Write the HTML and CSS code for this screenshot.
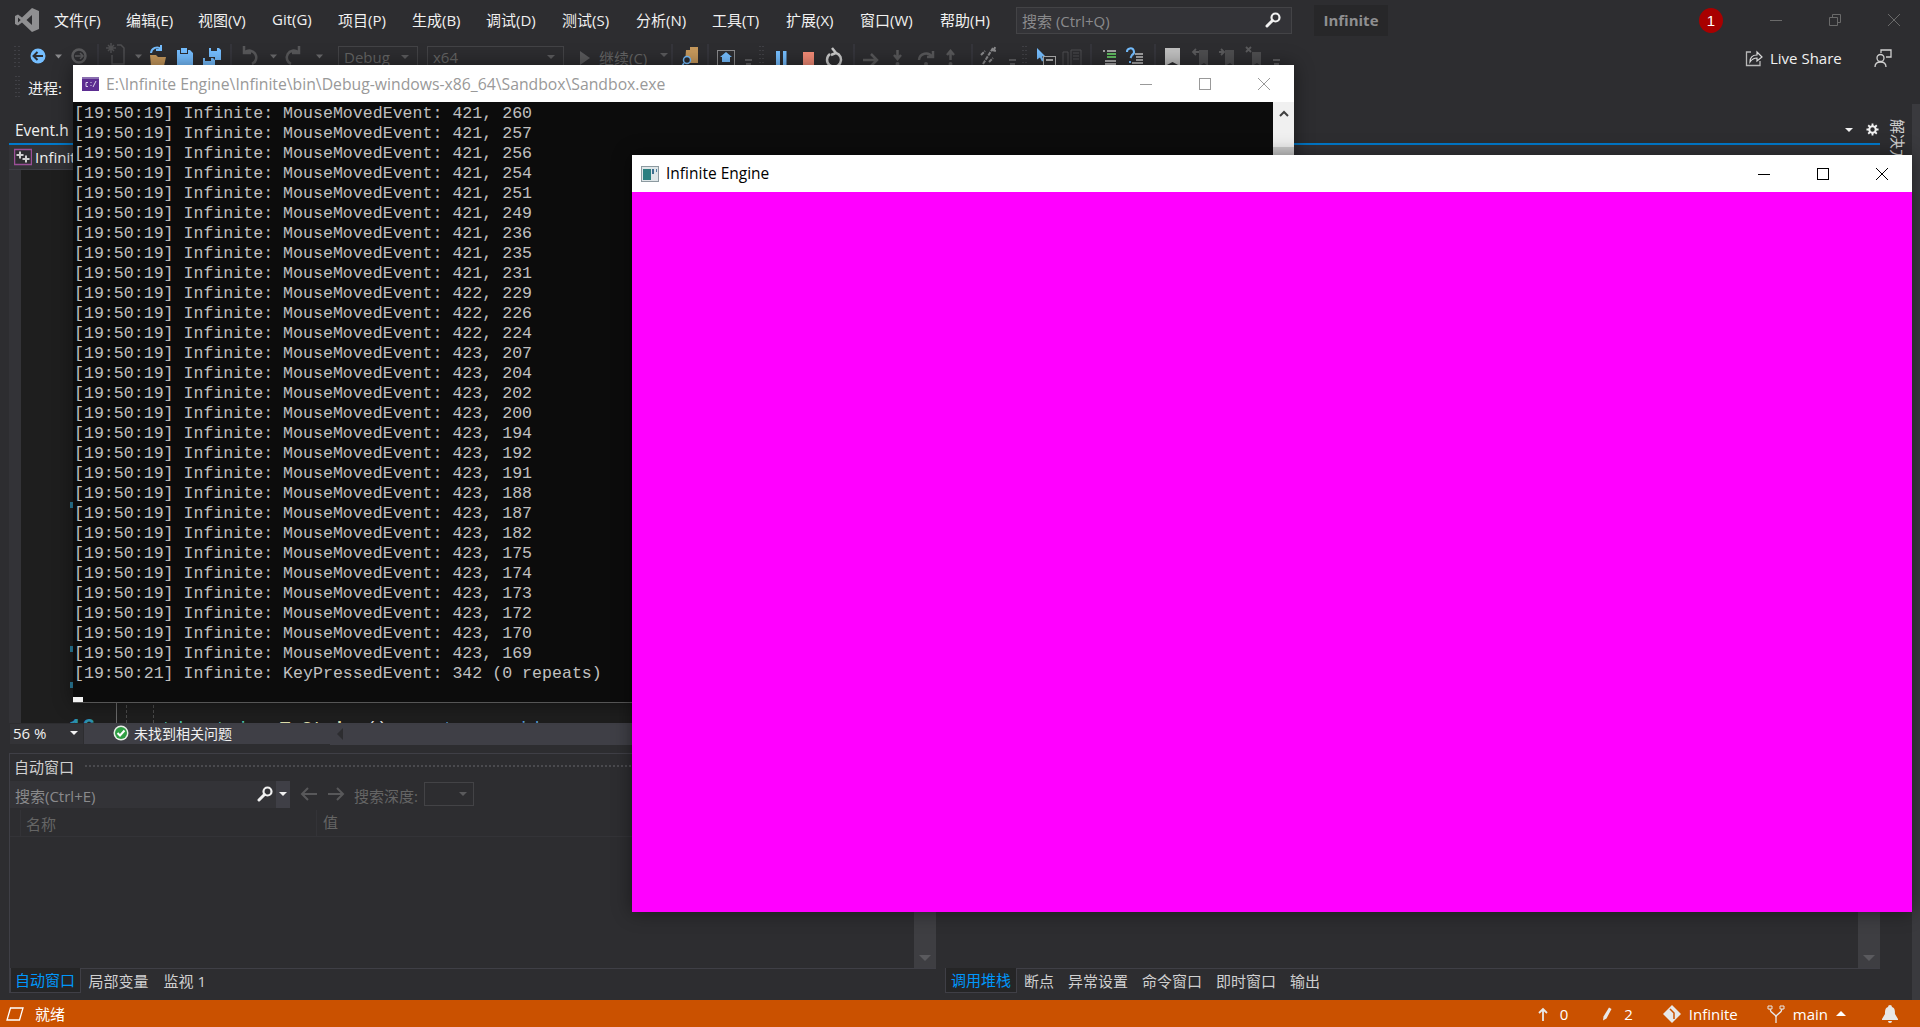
FILE: index.html
```html
<!DOCTYPE html>
<html lang="zh-CN">
<head>
  <meta charset="UTF-8">
  <title>Infinite - Microsoft Visual Studio</title>
  <link rel="stylesheet" href="styles.css">
</head>
<body>
  <!-- menu bar -->
  <header class="menubar">
    <svg class="vs-logo" viewBox="0 0 24 24" width="24" height="24"><path fill-rule="evenodd" fill="#8f8f91" d="M17 0L24 3V21L17 24L7 14.5L3 17.5L0 16V8L3 6.5L7 9.5ZM17 7L11.5 12L17 17ZM3 9.5V14.5L5.7 12Z"/></svg>
    <nav class="menu">
      <span class="w48">文件(F)</span>
      <span class="w48">编辑(E)</span>
      <span class="w50">视图(V)</span>
      <span class="w42">Git(G)</span>
      <span class="w50">项目(P)</span>
      <span class="w50">生成(B)</span>
      <span class="w52">调试(D)</span>
      <span class="w50">测试(S)</span>
      <span class="w52">分析(N)</span>
      <span class="w50">工具(T)</span>
      <span class="w50">扩展(X)</span>
      <span class="w56">窗口(W)</span>
      <span class="w52">帮助(H)</span>
    </nav>
    <div class="quick-search">
      <span>搜索 (Ctrl+Q)</span>
      <svg viewBox="0 0 16 16" width="16" height="16"><circle cx="10.5" cy="5.5" r="4" fill="none" stroke="#f1f1f1" stroke-width="2.2"/><path d="M7.5 8.5L2 14" stroke="#f1f1f1" stroke-width="3" stroke-linecap="round"/></svg>
    </div>
    <div class="sol-name">Infinite</div>
    <div class="badge">1</div>
    <div class="caption">
      <svg viewBox="0 0 14 14" width="14" height="14"><path d="M1 7.500H13" stroke="#6a6a6a"/></svg>
      <svg viewBox="0 0 14 14" width="14" height="14"><path d="M1.500 4.500H9.500V12.500H1.500ZM4.500 4.500V1.500H12.500V9.500H9.500" fill="none" stroke="#6a6a6a"/></svg>
      <svg viewBox="0 0 14 14" width="14" height="14"><path d="M1 1L13 13M13 1L1 13" stroke="#6a6a6a"/></svg>
    </div>
  </header>

  <!-- toolbar -->
  <div class="toolbar">
    <svg class="tools-left" viewBox="10 40 322 30" width="322" height="30">
      <path d="M15 46v22M19 46v22" stroke="#55555a" stroke-dasharray="1 3"/>
      <circle cx="38" cy="56" r="7.500" fill="#75beff"/>
      <path d="M43 56H34M37.500 52L33.500 56L37.500 60" fill="none" stroke="#2d2d30" stroke-width="2"/>
      <path d="M55 54.500h7l-3.500 4z" fill="#8a8a8c"/>
      <circle cx="79" cy="56" r="6.500" fill="none" stroke="#5a5a5c" stroke-width="2.500"/>
      <path d="M75 56H83M80 53L83 56L80 59" fill="none" stroke="#5a5a5c" stroke-width="1.500"/>
      <path d="M98 44V66" stroke="#3f3f46"/>
      <path d="M108 45l6 6M114 45l-6 6M111 43v10M106 48h10" stroke="#4e4e50" stroke-width="1.500"/>
      <path d="M117 45h4l3 3v16h-12V55" fill="none" stroke="#4e4e50" stroke-width="1.500"/>
      <path d="M135 54.500h7l-3.500 4z" fill="#6a6a6c"/>
      <path d="M150 55h6l2 2h8l-2 9h-13z" fill="#c7995c"/>
      <path d="M151 53a6 6 0 0 1 10-4M161 45v5h-5" fill="none" stroke="#75beff" stroke-width="2"/>
      <path d="M177 50h3v4h8v-4h2l3 3v13h-16z" fill="#75beff"/>
      <path d="M181 48h6v5h-6z" fill="#75beff"/>
      <path d="M203 58h2v3h6v-3h2l2 2v6h-12z" fill="#75beff"/>
      <path d="M209 48h2v3h6v-3h2l2 2v10h-6v-3h-6z" fill="#75beff"/>
      <path d="M231 44V66" stroke="#3f3f46"/>
      <path d="M244 46v7h7M245 52a7 7 0 1 1 7 12" fill="none" stroke="#58585a" stroke-width="2.500"/>
      <path d="M270 54.500h7l-3.500 4z" fill="#6a6a6c"/>
      <path d="M299 46v7h-7M298 52a7 7 0 1 0-7 12" fill="none" stroke="#58585a" stroke-width="2.500"/>
      <path d="M316 54.500h7l-3.500 4z" fill="#6a6a6c"/>
    </svg>
    <div class="combo combo-debug"><span>Debug</span><i class="caret dim"></i></div>
    <div class="combo combo-arch"><span>x64</span><i class="caret dim"></i></div>
    <svg class="play" viewBox="0 0 12 16" width="12" height="16"><path d="M1 1L11 8L1 15Z" fill="#5a5a5c"/></svg>
    <span class="continue">继续(C)</span>
    <i class="caret dim"></i>
    <svg class="tools-right" viewBox="670 40 624 30" width="624" height="30">
      <path d="M672 44V66" stroke="#3f3f46"/>
      <path d="M686 50h4v-3h8v16h-13z" fill="#c7995c"/>
      <circle cx="687" cy="60" r="3.500" fill="#2d2d30" stroke="#75beff" stroke-width="1.500"/>
      <path d="M684 63l-2 3" stroke="#75beff" stroke-width="1.500"/>
      <path d="M708 44V66" stroke="#3f3f46"/>
      <rect x="717.500" y="50.500" width="17" height="15" fill="none" stroke="#8a8a8c"/>
      <path d="M726 52l6 5h-2v5h-8v-5h-2z" fill="#75beff"/>
      <path d="M745 60h7M746 64h5" stroke="#8a8a8c"/>
      <path d="M760 46v22M763 46v22" stroke="#55555a" stroke-dasharray="1 3"/>
      <path d="M776 51h4v16h-4zM783 51h3.500v16H783z" fill="#75beff"/>
      <rect x="803" y="52" width="11" height="13" fill="#f38b76"/>
      <path d="M830 54a7 7 0 1 0 6-1M832 48l4 5-5 2" fill="none" stroke="#c8c8c8" stroke-width="2.500"/>
      <path d="M854 44V66" stroke="#3f3f46"/>
      <path d="M863 60h14M871 54l6 6-6 6" fill="none" stroke="#58585a" stroke-width="2.500"/>
      <path d="M897.500 50v8M894 55l3.500 4 3.500-4" fill="none" stroke="#58585a" stroke-width="2.500"/>
      <circle cx="897.500" cy="64" r="2" fill="#58585a"/>
      <path d="M919 60a7 7 0 0 1 13-3M933 51v6h-6" fill="none" stroke="#58585a" stroke-width="2.500"/>
      <circle cx="926" cy="64" r="2" fill="#58585a"/>
      <path d="M950.500 60v-8M947 55l3.500-4 3.500 4" fill="none" stroke="#58585a" stroke-width="2.500"/>
      <circle cx="950.500" cy="64" r="2" fill="#58585a"/>
      <path d="M972 44V66" stroke="#3f3f46"/>
      <path d="M983 64l10-16M981 55l4-4M989 62l4-4M992 50l4 1M995 47l-1 4" fill="none" stroke="#8a8a8c" stroke-width="2" stroke-dasharray="4 1"/>
      <path d="M1009 60h7M1010 64h5" stroke="#8a8a8c"/>
      <path d="M1023 46v22M1026 46v22" stroke="#55555a" stroke-dasharray="1 3"/>
      <path d="M1037 48l8 8-3 .500 2 4-2 1-2-4-3 2z" fill="#75beff"/>
      <rect x="1043.500" y="56.500" width="12" height="9" fill="none" stroke="#b0b0b0"/>
      <path d="M1046 60h7" stroke="#b0b0b0" stroke-width="2"/>
      <path d="M1063 52h5v14h-5zM1071 50h10v16h-10zM1073 53h6M1073 56h6M1073 59h6" fill="none" stroke="#4e4e50"/>
      <path d="M1091 44V66" stroke="#3f3f46"/>
      <path d="M1103 51h2M1107 51h9" stroke="#c8c8c8" stroke-width="1.500"/>
      <path d="M1107 54h9M1107 57h9" stroke="#5fb95f" stroke-width="2"/>
      <path d="M1105 61h11M1105 64h11" stroke="#c8c8c8" stroke-width="1.500"/>
      <path d="M1127 52a3.500 3.500 0 1 1 5 3l-1.500 3M1130 61v2" fill="none" stroke="#75beff" stroke-width="2"/>
      <path d="M1135 54h8M1136 57h7M1136 60h7M1132 63h11" stroke="#c8c8c8" stroke-width="1.500"/>
      <path d="M1155 44V66" stroke="#3f3f46"/>
      <path d="M1165 48h15v18l-7.500-4-7.500 4z" fill="#c0c0c0"/>
      <path d="M1199 50h9v16l-4-3-5 3zM1225 50h9v16l-4-3-5 3zM1252 52h9v14l-4-3-5 3z" fill="#4e4e50"/>
      <path d="M1199 52h-6M1196 49l-3 3 3 3M1219 52h5M1221 49l3 3-3 3M1246 47l5 5M1251 47l-5 5" fill="none" stroke="#5a5a5c" stroke-width="1.800"/>
      <path d="M1273 60h7M1274 64h5" stroke="#8a8a8c"/>
    </svg>
    <div class="liveshare">
      <svg viewBox="0 0 18 18" width="18" height="18"><path d="M6 3H1.500V16.500H15V12" fill="none" stroke="#b8b8b8" stroke-width="1.300"/><path d="M5 13c0-5 3-7 7-7V3l5 5-5 4V9c-3 0-5 1-7 4z" fill="none" stroke="#d8d8d8" stroke-width="1.200"/></svg>
      <span>Live Share</span>
      <svg class="person" viewBox="0 0 18 18" width="18" height="18"><circle cx="6.500" cy="9" r="3.500" fill="none" stroke="#d0d0d0" stroke-width="1.300"/><path d="M1 18c0-3 2-5 5.500-5s5.500 2 5.500 5M7 4V1H17V8H12" fill="none" stroke="#d0d0d0" stroke-width="1.300"/></svg>
    </div>
  </div>

  <div class="toolbar2">
    <svg viewBox="0 0 10 24" width="10" height="24"><path d="M5 1v22M8 1v22" stroke="#55555a" stroke-dasharray="1 3"/></svg>
    <span>进程:</span>
  </div>

  <!-- main dock area -->
  <div class="workspace">
    <div class="center">
      <div class="docwell">
        <div class="doc-tabs">
          <span class="doc-tab">Event.h</span>
          <span class="spacer"></span>
          <i class="caret light"></i>
          <svg class="gear" viewBox="0 0 14 14" width="13" height="13"><circle cx="7" cy="7" r="3.500" fill="none" stroke="#f1f1f1" stroke-width="2.200"/><path d="M7 .5v3M7 10.500v3M.5 7h3M10.500 7h3M2.400 2.400l2 2M9.600 9.600l2 2M11.600 2.400l-2 2M4.400 9.600l-2 2" stroke="#f1f1f1" stroke-width="2"/></svg>
        </div>
        <div class="doc-accent"></div>
        <div class="nav-row">
          <svg viewBox="0 0 18 18" width="18" height="18"><rect x=".5" y="1.500" width="17" height="15" fill="#2d2d30" stroke="#9b4f96" stroke-width="1.500"/><path d="M6 3.500v7M2.500 7h7M12 7.500v7M8.500 11h7" stroke="#d0d0d0" stroke-width="2"/></svg>
          <span class="nav-name">Infinit</span>
        </div>
        <div class="editor">
          <div class="margin-strip"></div>
          <div class="code">
            <i class="guide solid"></i>
            <i class="guide dash1"></i>
            <i class="guide dash2"></i>
            <div class="code-line"><i class="tick"></i></div>
            <div class="code-line"></div>
            <div class="code-line"></div>
            <div class="code-line"></div>
            <div class="code-line"><i class="tick"></i></div>
            <div class="code-line"><i class="tick"></i></div>
            <div class="code-line"><span class="ln">16</span><span class="kw-type">std::string</span> <span class="fn">ToString</span><span class="plain">()</span> <span class="kw">const</span> <span class="kw">override</span></div>
          </div>
        </div>
        <div class="editor-status">
          <div class="zoom-box"><span>56 %</span><i class="caret light"></i></div>
          <div class="issues">
            <svg viewBox="0 0 16 16" width="16" height="16"><circle cx="8" cy="8" r="7.500" fill="#e8f0e8"/><circle cx="8" cy="8" r="6" fill="#2f9e44"/><path d="M4.500 8l2.500 2.500 4.500-5" fill="none" stroke="#fff" stroke-width="2"/></svg>
            <span>未找到相关问题</span>
          </div>
          <i class="tri-left"></i>
        </div>
      </div>

      <div class="panels">
        <section class="panel panel-left">
          <div class="panel-title"><span>自动窗口</span><i class="grip"></i></div>
          <div class="search-row">
            <div class="search-box">
              <span>搜索(Ctrl+E)</span>
              <svg viewBox="0 0 16 16" width="16" height="16"><circle cx="10.500" cy="5.500" r="4" fill="none" stroke="#f1f1f1" stroke-width="2.200"/><path d="M7.500 8.500L2 14" stroke="#f1f1f1" stroke-width="3" stroke-linecap="round"/></svg>
              <div class="search-drop"><i class="caret light"></i></div>
            </div>
            <svg class="nav-arrow" viewBox="0 0 18 16" width="18" height="16"><path d="M17 8H2M8 2L2 8l6 6" fill="none" stroke="#58585a" stroke-width="2"/></svg>
            <svg class="nav-arrow" viewBox="0 0 18 16" width="18" height="16"><path d="M1 8h15M10 2l6 6-6 6" fill="none" stroke="#58585a" stroke-width="2"/></svg>
            <span class="depth-label">搜索深度:</span>
            <div class="depth-combo"><i class="caret dim"></i></div>
          </div>
          <div class="panel-body">
            <div class="grid-area">
              <div class="grid-head">
                <span class="col-name">名称</span>
                <span class="col-value">值</span>
              </div>
            </div>
            <div class="vscroll"><i class="tri-down"></i></div>
          </div>
          <div class="tool-tabs">
            <span class="tool-tab active">自动窗口</span>
            <span class="tool-tab">局部变量</span>
            <span class="tool-tab">监视 1</span>
          </div>
        </section>
        <section class="panel panel-right">
          <div class="panel-body">
            <div class="grid-area"></div>
            <div class="vscroll"><i class="tri-down"></i></div>
          </div>
          <div class="tool-tabs">
            <span class="tool-tab active">调用堆栈</span>
            <span class="tool-tab">断点</span>
            <span class="tool-tab">异常设置</span>
            <span class="tool-tab">命令窗口</span>
            <span class="tool-tab">即时窗口</span>
            <span class="tool-tab">输出</span>
          </div>
        </section>
      </div>
    </div>
    <aside class="side-tabs"><span>解决方案</span></aside>
    <div class="side-stripe"></div>
  </div>

  <!-- status bar -->
  <footer class="statusbar">
    <svg viewBox="0 0 18 14" width="18" height="14"><path d="M4.500 1H17L13.500 13H1Z" fill="none" stroke="#fff" stroke-width="1.300"/></svg>
    <span class="ready">就绪</span>
    <span class="spacer"></span>
    <div class="stat count unpushed">
      <svg viewBox="0 0 10 14" width="10" height="14"><path d="M5 14V2M1 6l4-4 4 4" fill="none" stroke="#e8e8e8" stroke-width="1.800"/></svg>
      <span>0</span>
    </div>
    <div class="stat count">
      <svg viewBox="0 0 10 14" width="10" height="14"><path d="M7 .5l2.500 1.500-5 9.500L1 13.500l.5-4z" fill="#e8e8e8"/></svg>
      <span>2</span>
    </div>
    <div class="stat">
      <svg viewBox="0 0 18 18" width="18" height="18"><path d="M9 0l9 9-9 9-9-9z" fill="#e8e8e8"/><path d="M7 4l4 4v6" fill="none" stroke="#ca5100" stroke-width="1.500"/></svg>
      <span>Infinite</span>
    </div>
    <div class="stat branch">
      <svg viewBox="0 0 18 18" width="18" height="18"><path d="M3 4c0 4 6 5 6 8v6M15 4c0 4-6 5-6 8" fill="none" stroke="#e8e8e8" stroke-width="1.300"/><path d="M1 1h4v3H1zM13 1h4v3h-4z" fill="none" stroke="#e8e8e8"/></svg>
      <span>main</span>
      <i class="tri-up"></i>
    </div>
    <svg class="bell" viewBox="0 0 20 20" width="20" height="20"><path d="M10 1a2 2 0 0 1 2 2c3 1 3 4 3 7l3 5v1H2v-1l3-5c0-3 0-6 3-7a2 2 0 0 1 2-2zM8 17h4a2 2 0 0 1-4 0z" fill="#e8e8e8"/></svg>
  </footer>

  <!-- console window -->
  <div class="win console-win">
    <div class="win-title">
      <svg viewBox="0 0 17 14" width="17" height="14"><rect width="17" height="14" fill="#5c2d91"/><rect y="0" width="17" height="2" fill="#8a6fb0"/><path d="M6 5.500H4v4h2M9 5v1M9 8v1M14 4l-3 6" fill="none" stroke="#d8d0e8"/></svg>
      <span class="con-title">E:\Infinite Engine\Infinite\bin\Debug-windows-x86_64\Sandbox\Sandbox.exe</span>
      <div class="win-btns dimmed">
        <svg viewBox="0 0 14 14" width="14" height="14"><path d="M1 7.500H13" stroke="#999"/></svg>
        <svg viewBox="0 0 14 14" width="14" height="14"><rect x="1.500" y="1.500" width="11" height="11" fill="none" stroke="#999"/></svg>
        <svg viewBox="0 0 14 14" width="14" height="14"><path d="M1 1L13 13M13 1L1 13" stroke="#999"/></svg>
      </div>
    </div>
    <div class="con-body">
      <div class="con-text" id="con-text"></div>
      <div class="con-scroll">
        <svg viewBox="0 0 10 7" width="10" height="7"><path d="M1 6L5 2l4 4" fill="none" stroke="#404040" stroke-width="2"/></svg>
        <i class="con-thumb"></i>
      </div>
    </div>
  </div>

  <!-- game window -->
  <div class="win game-win">
    <div class="win-title">
      <svg viewBox="0 0 18 16" width="18" height="16"><rect x=".5" y=".5" width="17" height="15" fill="#dfe6e8" stroke="#8d9aa0"/><rect x="2" y="3" width="8" height="11" fill="#2b7f80"/><rect x="11" y="3" width="2" height="5" fill="#3d6f8f"/><rect x="15" y="3" width="1" height="3" fill="#4d7f9f"/></svg>
      <span class="game-title">Infinite Engine</span>
      <div class="win-btns">
        <svg viewBox="0 0 14 14" width="14" height="14"><path d="M1 7.500H13" stroke="#000"/></svg>
        <svg viewBox="0 0 14 14" width="14" height="14"><rect x="1.500" y="1.500" width="11" height="11" fill="none" stroke="#000"/></svg>
        <svg viewBox="0 0 14 14" width="14" height="14"><path d="M1 1L13 13M13 1L1 13" stroke="#000"/></svg>
      </div>
    </div>
    <div class="game-view"></div>
  </div>

  <script>
    // console output
    const moves = [
      [421, 260], [421, 257], [421, 256], [421, 254], [421, 251], [421, 249], [421, 236],
      [421, 235], [421, 231], [422, 229], [422, 226], [422, 224], [423, 207], [423, 204],
      [423, 202], [423, 200], [423, 194], [423, 192], [423, 191], [423, 188], [423, 187],
      [423, 182], [423, 175], [423, 174], [423, 173], [423, 172], [423, 170], [423, 169]
    ];
    const conText = document.getElementById("con-text");
    let html = "";
    moves.forEach(m => {
      html += `<div class="con-line">[19:50:19] Infinite: MouseMovedEvent: ${m[0]}, ${m[1]}</div>`;
    });
    html += `<div class="con-line">[19:50:21] Infinite: KeyPressedEvent: 342 (0 repeats)</div>`;
    html += `<div class="con-cursor"></div>`;
    conText.innerHTML = html;
  </script>
</body>
</html>
```

FILE: styles.css
```css
* {
  box-sizing: border-box;
}

html, body {
  margin: 0;
  height: 100%;
  overflow: hidden;
}

body {
  display: flex;
  flex-direction: column;
  background-color: #2d2d30;
  color: #f1f1f1;
  font-family: "Open Sans", "Noto Sans CJK SC", sans-serif;
  font-size: 15px;
}

svg {
  display: block;
  flex: none;
}

.spacer {
  flex: 1;
}

/* carets */
.caret {
  display: block;
  width: 0;
  height: 0;
  border-left: 4px solid transparent;
  border-right: 4px solid transparent;
  border-top: 4px solid #f1f1f1;
}

.caret.dim {
  border-top-color: #5a5a5c;
}

.caret.light {
  border-top-color: #f1f1f1;
}

/* menu bar */
.menubar {
  height: 40px;
  display: flex;
  align-items: center;
  padding-left: 15px;
  flex: none;
}

.vs-logo {
  margin-right: 15px;
}

.menu {
  display: flex;
  gap: 24px;
  margin-top: -2px;
  white-space: nowrap;
}

.w42 { width: 42px; }
.w48 { width: 48px; }
.w50 { width: 50px; }
.w52 { width: 52px; }
.w56 { width: 56px; }

.quick-search {
  margin-left: 24px;
  width: 276px;
  height: 27px;
  background-color: #333337;
  border: 1px solid #434346;
  display: flex;
  align-items: center;
  justify-content: space-between;
  padding: 0 10px 0 5px;
  color: #8a8a8c;
}

.sol-name {
  margin-left: 22px;
  width: 74px;
  height: 31px;
  background-color: #272729;
  color: #8f8f91;
  font-weight: 700;
  display: flex;
  align-items: center;
  justify-content: center;
}

.badge {
  margin-left: 311px;
  width: 24px;
  height: 25px;
  border-radius: 50%;
  background-color: #a80000;
  color: #fff;
  display: flex;
  align-items: center;
  justify-content: center;
  font-family: "Liberation Sans", sans-serif;
}

.caption {
  margin-left: 46px;
  display: flex;
  gap: 45px;
}

/* toolbars */
.toolbar {
  height: 30px;
  flex: none;
  display: flex;
  align-items: center;
  padding-left: 10px;
  position: relative;
}

.tools-left {
  margin-right: 6px;
}

.combo {
  height: 22px;
  border: 1px solid #434346;
  display: flex;
  align-items: center;
  justify-content: space-between;
  padding: 0 8px 0 5px;
  color: #656565;
  margin-top: 4px;
}

.combo-debug {
  width: 80px;
  margin-right: 9px;
}

.combo-arch {
  width: 137px;
  margin-right: 15px;
}

.play {
  margin-right: 8px;
  margin-top: 5px;
}

.continue {
  color: #656565;
  width: 61px;
  margin-top: 4px;
}

.tools-right {
  margin-left: 2px;
}

.liveshare {
  margin-left: 451px;
  display: flex;
  align-items: center;
  color: #f1f1f1;
  margin-top: 6px;
  white-space: nowrap;
}

.liveshare span {
  margin-left: 7px;
  width: 104px;
}

.toolbar2 {
  height: 34px;
  flex: none;
  display: flex;
  align-items: center;
  padding-left: 11px;
  gap: 7px;
}

/* dock area */
.workspace {
  flex: 1;
  display: flex;
  min-height: 0;
}

.center {
  width: 1880px;
  padding-left: 9px;
  display: flex;
  flex-direction: column;
}

.docwell {
  height: 641px;
  flex: none;
  display: flex;
  flex-direction: column;
}

.doc-tabs {
  height: 39px;
  display: flex;
  align-items: center;
  padding: 12px 1px 0 6px;
}

.doc-tab {
  font-size: 15.5px;
}

.gear {
  margin-left: 13px;
}

.doc-accent {
  height: 2px;
  background-color: #007acc;
}

.nav-row {
  height: 25px;
  display: flex;
  align-items: center;
  padding-left: 5px;
  gap: 3px;
  background-color: #333337;
  border-bottom: 1px solid #3f3f46;
}

.editor {
  height: 553px;
  display: flex;
}

.margin-strip {
  width: 12px;
  background-color: #333337;
  flex: none;
}

.code {
  flex: 1;
  background-color: #1e1e1e;
  position: relative;
  overflow: hidden;
  padding-top: 325px;
  font-family: "Liberation Mono", monospace;
  font-size: 18px;
  color: #dcdcdc;
}

.guide {
  position: absolute;
  top: 0;
  bottom: 0;
  width: 0;
}

.guide.solid {
  left: 95px;
  border-left: 1px solid #6a6a6a;
}

.guide.dash1 {
  left: 105px;
  border-left: 1px dashed #4a4a4a;
}

.guide.dash2 {
  left: 132px;
  border-left: 1px dashed #4a4a4a;
}

.code-line {
  height: 36px;
  line-height: 36px;
  white-space: pre;
  display: flex;
}

.tick {
  display: block;
  width: 3px;
  height: 6px;
  margin: 7px 0 0 49px;
  background-color: #2b7f9f;
}

.ln {
  width: 130px;
  padding-left: 48px;
  color: #2b91af;
  flex: none;
  font-weight: 700;
  font-size: 22px;
}

.kw-type {
  color: #4ec9b0;
  margin-right: 10px;
}

.fn {
  color: #dcdcaa;
  font-weight: 700;
}

.plain {
  margin-right: 12px;
}

.kw {
  color: #569cd6;
  margin-right: 10px;
}

.editor-status {
  height: 22px;
  display: flex;
  align-items: center;
  background-color: #3f3f46;
  font-size: 14px;
}

.zoom-box {
  width: 75px;
  height: 22px;
  background-color: #333337;
  border: 1px solid #2d2d30;
  display: flex;
  align-items: center;
  justify-content: space-between;
  padding: 0 5px 2px 3px;
  flex: none;
  font-size: 15px;
}

.issues {
  width: 246px;
  height: 22px;
  border-bottom: 1px solid #2d2d30;
  display: flex;
  align-items: center;
  padding: 0 0 1px 29px;
  gap: 5px;
  flex: none;
}

.tri-left {
  margin-left: 7px;
  width: 0;
  height: 0;
  border-top: 6px solid transparent;
  border-bottom: 6px solid transparent;
  border-right: 6px solid #2d2d30;
}

/* lower tool panels */
.panels {
  flex: 1;
  display: flex;
  gap: 9px;
  margin-top: 8px;
  margin-bottom: 7px;
  min-height: 0;
}

.panel {
  display: flex;
  flex-direction: column;
}

.panel-left {
  width: 927px;
  border-left: 1px solid #3f3f46;
  border-top: 1px solid #3f3f46;
}

.panel-right {
  flex: 1;
}

.panel-title {
  height: 26px;
  display: flex;
  align-items: center;
  padding: 0 0 2px 4px;
  gap: 10px;
  color: #d0d0d0;
}

.grip {
  flex: 1;
  height: 5px;
  background-image: radial-gradient(#4a4a4e 1px, transparent 1px);
  background-size: 4px 4px;
}

.search-row {
  height: 28px;
  display: flex;
  align-items: center;
}

.search-box {
  width: 280px;
  height: 27px;
  background-color: #333337;
  color: #8a8a8c;
  display: flex;
  align-items: center;
  padding-left: 5px;
  flex: none;
}

.search-box span {
  flex: 1;
  padding-top: 2px;
}

.search-drop {
  width: 14px;
  height: 27px;
  margin-left: 3px;
  background-color: #3f3f46;
  display: flex;
  align-items: center;
  justify-content: center;
}

.nav-arrow {
  margin-left: 10px;
}

.nav-arrow + .nav-arrow {
  margin-left: 9px;
}

.depth-label {
  margin-left: 9px;
  padding-top: 3px;
  color: #656565;
}

.depth-combo {
  margin-left: 6px;
  width: 50px;
  height: 24px;
  border: 1px solid #434346;
  display: flex;
  align-items: center;
  justify-content: flex-end;
  padding-right: 6px;
}

.panel-body {
  flex: 1;
  display: flex;
  min-height: 0;
}

.grid-area {
  flex: 1;
}

.grid-head {
  height: 29px;
  display: flex;
  align-items: flex-end;
  border-bottom: 1px solid #333337;
  color: #656565;
  padding-left: 10px;
}

.col-name {
  width: 297px;
  height: 26px;
  line-height: 28px;
  padding-left: 5px;
  border-left: 1px solid #333337;
  border-right: 1px solid #333337;
}

.col-value {
  padding-left: 6px;
  line-height: 28px;
}

.vscroll {
  width: 22px;
  background-color: #3e3e42;
  display: flex;
  flex-direction: column;
  justify-content: flex-end;
  align-items: center;
  padding-bottom: 7px;
}

.tri-down {
  width: 0;
  height: 0;
  border-left: 6px solid transparent;
  border-right: 6px solid transparent;
  border-top: 6px solid #5a5a5e;
}

.tool-tabs {
  height: 25px;
  display: flex;
  border-top: 1px solid #3f3f46;
  flex: none;
  color: #d0d0d0;
}

.tool-tab {
  padding: 0 7px;
  height: 24px;
  line-height: 24px;
}

.panel-left .tool-tab {
  padding: 0 7.5px;
}

.tool-tab.active {
  color: #0097fb;
  background-color: #252526;
  border: 1px solid #3f3f46;
  border-top: none;
  padding: 0 5px;
  margin-top: -1px;
  height: 25px;
}

.panel-left .tool-tab.active {
  color: #0097fb;
  background-color: #252526;
  border: 1px solid #3f3f46;
  border-top: none;
  padding: 0 5px 0 4px;
  margin-top: -1px;
  height: 25px;
}

.side-tabs {
  width: 32px;
  padding: 15px 4px 0 0;
  writing-mode: vertical-rl;
  line-height: 20px;
  color: #d0d0d0;
  flex: none;
}

.side-tabs span {
  text-orientation: sideways;
}

.side-stripe {
  width: 8px;
  background-color: #3a3a3e;
  flex: none;
}

/* status bar */
.statusbar {
  height: 27px;
  flex: none;
  background-color: #ca5100;
  display: flex;
  align-items: center;
  padding: 0 20px 0 6px;
  color: #fff;
}

.ready {
  margin-left: 11px;
}

.stat {
  display: flex;
  align-items: center;
  gap: 8px;
  margin-right: 29px;
}

.stat.count {
  gap: 12px;
  margin-right: 30px;
}

.stat.unpushed {
  margin-right: 34px;
}

.stat.branch {
  margin-right: 34px;
}

.tri-up {
  width: 0;
  height: 0;
  border-left: 5px solid transparent;
  border-right: 5px solid transparent;
  border-bottom: 5px solid #fff;
}

/* floating windows */
.win {
  position: absolute;
  display: flex;
  flex-direction: column;
  box-shadow: 0 0 18px rgba(0, 0, 0, 0.45);
}

.console-win {
  left: 73px;
  top: 65px;
  width: 1221px;
  height: 638px;
}

.game-win {
  left: 632px;
  top: 155px;
  width: 1280px;
  height: 757px;
}

.win-title {
  height: 37px;
  flex: none;
  background-color: #fff;
  display: flex;
  align-items: center;
  padding-left: 9px;
  font-family: "Open Sans", sans-serif;
  font-size: 15.5px;
  white-space: nowrap;
}

.con-title {
  margin-left: 7px;
  color: #999;
  font-size: 15.75px;
  flex: 1;
}

.game-title {
  margin-left: 7px;
  margin-top: -2px;
  color: #000;
  flex: 1;
}

.win-btns {
  display: flex;
  gap: 45px;
  padding-right: 23px;
}

.con-body {
  flex: 1;
  display: flex;
  min-height: 0;
  background-color: #0c0c0c;
  border-bottom: 1px solid #555;
}

.con-text {
  flex: 1;
  padding-top: 2px;
  padding-left: 1px;
  font-family: "Liberation Mono", monospace;
  font-size: 16.6px;
  line-height: 20px;
  color: #c0c0c0;
  white-space: pre;
}

.con-line {
  height: 20px;
}

.con-cursor {
  width: 10px;
  height: 5px;
  margin-top: 13px;
  margin-left: -1px;
  background-color: #f2f2f2;
}

.con-scroll {
  width: 21px;
  background-color: #f0f0f0;
  display: flex;
  flex-direction: column;
  align-items: center;
  padding-top: 8px;
}

.con-thumb {
  display: block;
  width: 100%;
  height: 20px;
  margin-top: 30px;
  background-color: #cdcdcd;
}

.game-view {
  flex: 1;
  background-color: #ff00ff;
}
```
